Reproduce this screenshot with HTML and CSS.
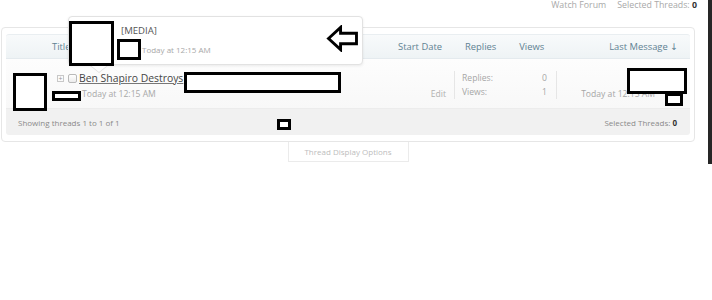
FILE: index.html
```html
<!DOCTYPE html>
<html>
<head>
<meta charset="utf-8">
<link rel="stylesheet" href="styles.css">
</head>
<body>
<div class="page">
  <div class="topbar">
    <span class="toplink">Watch Forum</span>
    <span class="toplink">Selected Threads: <b>0</b></span>
  </div>

  <div class="forum">
    <div class="head">
      <div class="hcell hmain"><span>Title</span><span>Start Date</span></div>
      <div class="hcell hstats"><span>Replies</span><span>Views</span></div>
      <div class="hcell hlast"><span>Last Message ↓</span></div>
    </div>
    <div class="row">
      <div class="cmain">
        <div class="avatar"></div>
        <div class="info">
          <div class="line1">
            <span class="expand">+</span>
            <span class="check"></span>
            <a class="title">Ben Shapiro Destroys</a>
          </div>
          <div class="line2">
            <span class="meta">Today at 12:15 AM</span>
            <span class="edit">Edit</span>
          </div>
        </div>
      </div>
      <div class="cstats">
        <div class="stat"><span>Replies:</span><span>0</span></div>
        <div class="stat"><span>Views:</span><span>1</span></div>
      </div>
      <div class="clast">
        <div class="lastuser">&nbsp;</div>
        <div class="lastdate">Today at 12:15 AM</div>
      </div>
    </div>
    <div class="foot">
      <span>Showing threads 1 to 1 of 1</span>
      <span>Selected Threads: <b>0</b></span>
    </div>
  </div>
  <div class="tab">Thread Display Options</div>

  <div class="tooltip">
    <div class="tipmedia">[MEDIA]</div>
    <div class="tiptime">Today at 12:15 AM</div>
    <svg class="arrow" viewBox="0 0 34 28" width="33" height="27">
      <path d="M2.5 14 L15 2.5 L15 8.5 L31.5 8.5 L31.5 19.5 L15 19.5 L15 25.5 Z" fill="none" stroke="#000" stroke-width="3" stroke-linejoin="miter"/>
    </svg>
  </div>

  <div class="redact r1"></div>
  <div class="redact r2"></div>
  <div class="redact r3"></div>
  <div class="redact r4"></div>
  <div class="redact r5"></div>
  <div class="redact r6"></div>
  <div class="redact r7"></div>
  <div class="redact r8"></div>

  <div class="edge"></div>
</div>
</body>
</html>
```

FILE: styles.css
```css
* { box-sizing: border-box; }
html, body { margin: 0; padding: 0; background: #fff; }
body {
  font-family: "Open Sans", "DejaVu Sans", sans-serif;
  width: 712px;
  height: 300px;
  overflow: hidden;
}
.page { position: relative; width: 712px; height: 300px; }

.topbar {
  height: 10px;
  display: flex;
  justify-content: flex-end;
  gap: 11px;
  padding-right: 15px;
  font-size: 8.8px;
  line-height: 10px;
  color: #a9a9a9;
}
.topbar b, .foot b { color: #333; font-weight: 700; }

.forum {
  margin: 17px 17px 0 1px;
  border: 1px solid #e6e6e6;
  border-radius: 4px;
  padding: 6px 4px 6px;
  background: #fff;
}

.head {
  display: grid;
  grid-template-columns: 448px 103px 1fr;
  height: 25px;
  background: linear-gradient(#f8fafb, #eef3f5);
  border-top: 1px solid #e9eef1;
  border-bottom: 1px solid #e4eaee;
  border-radius: 3px 3px 0 0;
  color: #5f8293;
  font-size: 9.4px;
}
.hcell { display: flex; align-items: center; }
.hmain { justify-content: space-between; padding: 0 12px 0 46px; }
.hstats { gap: 23px; padding-left: 11px; }
.hlast { justify-content: flex-end; padding-right: 12px; }

.row {
  display: grid;
  grid-template-columns: 448px 103px 1fr;
  height: 50px;
  background: linear-gradient(#fdfdfd, #f8f8f8);
  border-bottom: 1px solid #ececec;
}
.cmain { display: flex; }
.avatar { width: 46px; }
.info { flex: 1; padding-top: 12px; padding-right: 8px; }
.line1 { display: flex; align-items: center; height: 14px; }
.expand {
  width: 7px; height: 7px;
  border: 1px solid #c8c8c8;
  font-size: 7px; line-height: 5px;
  text-align: center; color: #999;
  margin: 0 4px 0 5px;
}
.check {
  width: 9px; height: 9px;
  border: 1px solid #b9b9b9;
  border-radius: 2px;
  background: linear-gradient(#fff, #ececec);
  margin-right: 2px;
}
.title {
  font-size: 10.4px;
  color: #454545;
  text-decoration: underline;
  text-decoration-color: #777;
}
.line2 {
  display: flex;
  justify-content: space-between;
  align-items: center;
  height: 14px;
  margin-top: 2px;
  padding-left: 30px;
}
.meta { font-size: 8.6px; color: #a8a8a8; }
.edit { font-size: 8.6px; color: #b0b0b0; }

.cstats {
  margin: 12px 0 11px;
  border-left: 1px solid #e6e6e6;
  border-right: 1px solid #e6e6e6;
  padding: 0 9px 0 7px;
  font-size: 8.6px;
  color: #a6a6a6;
}
.stat { display: flex; justify-content: space-between; height: 14px; line-height: 14px; }

.clast {
  text-align: right;
  padding: 12px 35px 0 0;
  font-size: 8.6px;
  color: #a6a6a6;
}
.lastuser { height: 14px; }
.lastdate { height: 14px; line-height: 14px; margin-top: 2px; }

.foot {
  height: 26px;
  background: #f1f1f1;
  border-radius: 0 0 3px 3px;
  display: flex;
  justify-content: space-between;
  align-items: center;
  padding: 0 13px 0 12px;
  font-size: 8px;
  color: #8a8a8a;
}

.tab {
  width: 121px;
  height: 20px;
  margin: 0 auto;
  position: relative;
  left: -8px;
  border: 1px solid #ebebeb;
  border-top: 0;
  text-align: center;
  font-size: 8px;
  line-height: 19px;
  color: #bdbdbd;
}

.tooltip {
  position: absolute;
  left: 68px; top: 16px;
  width: 295px; height: 49px;
  background: #fff;
  border: 1px solid #e2e2e2;
  border-radius: 4px;
  box-shadow: 0 1px 3px rgba(0,0,0,0.08);
}
.tooltip::before, .tooltip::after {
  content: "";
  position: absolute;
  left: 20px;
  border-style: solid;
  border-color: transparent;
}
.tooltip::before { top: 48px; border-width: 8px 10px 0; border-top-color: #e2e2e2; }
.tooltip::after { top: 47px; border-width: 8px 10px 0; border-top-color: #fff; }
.tipmedia {
  position: absolute; left: 52px; top: 7px;
  font-size: 9.6px; color: #555;
}
.tiptime {
  position: absolute; left: 73px; top: 27px;
  font-size: 8px; color: #a8a8a8;
}
.arrow { position: absolute; left: 257px; top: 8px; }

.redact {
  position: absolute;
  background: #fff;
  border: 3px solid #000;
}
.r1 { left: 69px; top: 21px; width: 45px; height: 45px; }
.r2 { left: 117px; top: 39px; width: 24px; height: 21px; }
.r3 { left: 13px; top: 73px; width: 34px; height: 38px; }
.r4 { left: 184px; top: 72px; width: 157px; height: 21px; }
.r5 { left: 52px; top: 91px; width: 29px; height: 10px; }
.r6 { left: 277px; top: 119px; width: 14px; height: 11px; }
.r7 { left: 627px; top: 68px; width: 60px; height: 26px; }
.r8 { left: 665px; top: 93px; width: 18px; height: 13px; }

.edge {
  position: absolute;
  right: 0; top: 0;
  width: 4px; height: 164px;
  background: #262626;
}
```
